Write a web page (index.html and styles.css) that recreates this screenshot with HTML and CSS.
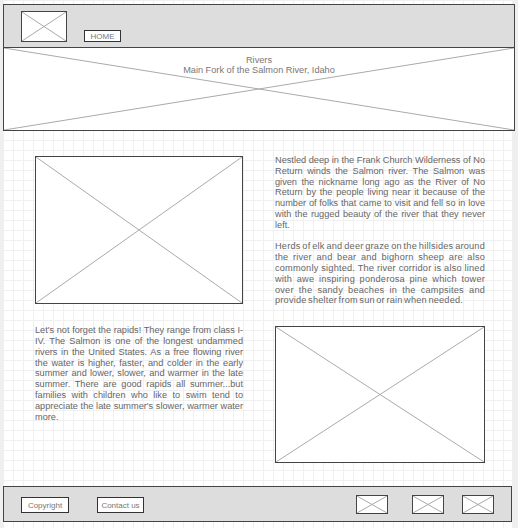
FILE: index.html
```html
<!DOCTYPE html>
<html lang="en">
<head>
    <meta charset="UTF-8">
    <title>Rivers</title>
    <link rel="stylesheet" href="styles.css">
</head>
<body>
    <div class="canvas">
        <div class="header">
            <div class="logo placeholder">
                <svg viewBox="0 0 100 100" preserveAspectRatio="none"><line x1="0" y1="0" x2="100" y2="100"/><line x1="100" y1="0" x2="0" y2="100"/></svg>
            </div>
            <div class="btn home-btn">HOME</div>
        </div>
        <div class="banner">
            <svg class="banner-x" viewBox="0 0 100 100" preserveAspectRatio="none"><line x1="0" y1="0" x2="100" y2="100"/><line x1="100" y1="0" x2="0" y2="100"/></svg>
            <div class="banner-text">Rivers<br>Main Fork of the Salmon River, Idaho</div>
        </div>

        <div class="content">
            <div class="placeholder pic pic-one">
                <svg viewBox="0 0 100 100" preserveAspectRatio="none"><line x1="0" y1="0" x2="100" y2="100"/><line x1="100" y1="0" x2="0" y2="100"/></svg>
            </div>
            <div class="copy">
                <p>Nestled deep in the Frank Church Wilderness of No Return winds the Salmon river. The Salmon was given the nickname long ago as the River of No Return by the people living near it because of the number of folks that came to visit and fell so in love with the rugged beauty of the river that they never left.</p>
                <p class="tight">Herds of elk and deer graze on the hillsides around the river and bear and bighorn sheep are also commonly sighted. The river corridor is also lined with awe inspiring ponderosa pine which tower over the sandy beaches in the campsites and provide shelter from sun or rain when needed.</p>
            </div>
            <div class="copy">
                <p>Let's not forget the rapids! They range from class I-IV. The Salmon is one of the longest undammed rivers in the United States. As a free flowing river the water is higher, faster, and colder in the early summer and lower, slower, and warmer in the late summer. There are good rapids all summer...but families with children who like to swim tend to appreciate the late summer's slower, warmer water more.</p>
            </div>
            <div class="placeholder pic pic-two">
                <svg viewBox="0 0 100 100" preserveAspectRatio="none"><line x1="0" y1="0" x2="100" y2="100"/><line x1="100" y1="0" x2="0" y2="100"/></svg>
            </div>
        </div>

        <div class="footer">
            <div class="btn foot-btn">Copyright</div>
            <div class="btn foot-btn contact">Contact us</div>
            <div class="icons">
                <div class="placeholder icon"><svg viewBox="0 0 100 100" preserveAspectRatio="none"><line x1="0" y1="0" x2="100" y2="100"/><line x1="100" y1="0" x2="0" y2="100"/></svg></div>
                <div class="placeholder icon"><svg viewBox="0 0 100 100" preserveAspectRatio="none"><line x1="0" y1="0" x2="100" y2="100"/><line x1="100" y1="0" x2="0" y2="100"/></svg></div>
                <div class="placeholder icon"><svg viewBox="0 0 100 100" preserveAspectRatio="none"><line x1="0" y1="0" x2="100" y2="100"/><line x1="100" y1="0" x2="0" y2="100"/></svg></div>
            </div>
        </div>
    </div>
</body>
</html>
```

FILE: styles.css
```css
body {
    margin: 0;
    padding: 0;
    background-color: #efefef;
    font-family: "Liberation Sans", Arial, sans-serif;
    color: #666;
}
.canvas {
    margin-left: 3px;
    width: 509px;
    height: 528px;
    padding-top: 4px;
    box-sizing: border-box;
    background-color: #fff;
    background-image:
        linear-gradient(#f0f0f0 1px, transparent 1px),
        linear-gradient(90deg, #f0f0f0 1px, transparent 1px);
    background-size: 10px 10px;
}
.placeholder {
    background: #fff;
    border: 1px solid #444;
    box-sizing: border-box;
}
.placeholder svg, .banner-x {
    display: block;
    width: 100%;
    height: 100%;
}
svg line {
    stroke: #aaa;
    stroke-width: 1;
    vector-effect: non-scaling-stroke;
}
.header {
    width: 512px;
    height: 43px;
    box-sizing: border-box;
    background: #ddd;
    border: 1px solid #444;
    border-bottom: none;
    display: flex;
    align-items: flex-end;
    padding: 6px 0 5px 17px;
}
.logo {
    width: 46px;
    height: 31px;
}
.btn {
    background: #fff;
    border: 1px solid #333;
    box-sizing: border-box;
    color: #777;
    font-size: 8px;
    display: flex;
    align-items: center;
    justify-content: center;
}
.home-btn {
    width: 37px;
    height: 12px;
    margin-left: 17px;
}
.banner {
    position: relative;
    width: 512px;
    height: 84px;
    box-sizing: border-box;
    background: #fff;
    border: 1px solid #444;
}
.banner-text {
    position: absolute;
    top: 8px;
    left: 0;
    right: 0;
    text-align: center;
    font-size: 9.2px;
    line-height: 9.5px;
    color: #777;
}
.content {
    display: grid;
    grid-template-columns: 208px 210px;
    column-gap: 32px;
    row-gap: 20px;
    padding: 25px 0 0 32px;
    height: 355px;
    box-sizing: border-box;
    align-items: start;
    align-content: start;
}
.pic-one {
    width: 208px;
    height: 148px;
}
.pic-two {
    width: 210px;
    height: 137px;
}
.copy {
    font-size: 9.2px;
    line-height: 10.8px;
    text-align: justify;
    margin-top: -1px;
}
.copy p {
    margin: 0 0 10.8px 0;
}
.copy p:last-child {
    margin-bottom: 0;
}
.copy .tight {
    letter-spacing: 0.2px;
    word-spacing: -1.2px;
}
.footer {
    width: 509px;
    height: 36px;
    box-sizing: border-box;
    background: #ddd;
    border: 1px solid #444;
    display: flex;
    align-items: center;
    padding-left: 17px;
}
.foot-btn {
    width: 48px;
    height: 16px;
    margin-top: 2px;
}
.contact {
    width: 47px;
    margin-left: 28px;
}
.icons {
    display: flex;
    margin-left: 212px;
    gap: 18px;
}
.icon {
    width: 32px;
    height: 19px;
}
.icon:nth-child(2) {
    margin-left: 6px;
}
```
